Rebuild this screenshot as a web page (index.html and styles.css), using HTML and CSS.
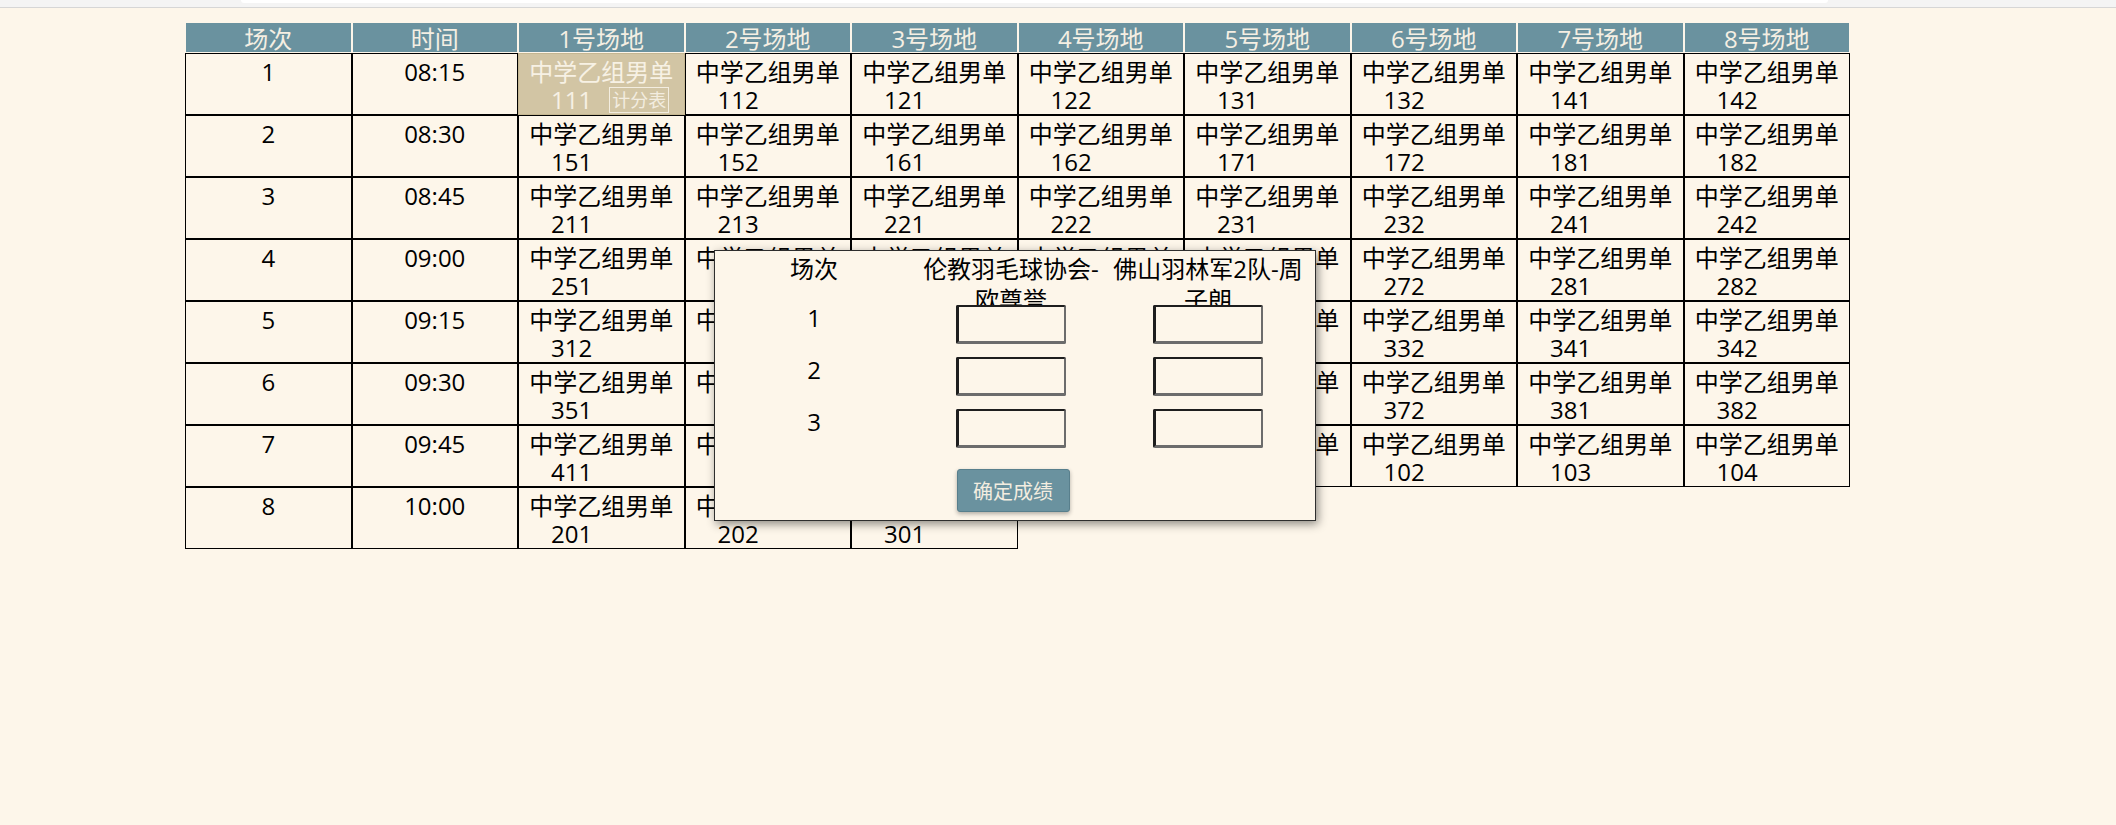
FILE: index.html
```html
<!DOCTYPE html>
<html lang="zh-CN">
<head>
<meta charset="utf-8">
<title>赛程</title>
<link rel="stylesheet" href="styles.css">
</head>
<body>
<div class="chrome"><div class="chrome-field"></div></div>
<main class="page">
  <table class="schedule">
    <thead>
      <tr>
        <th>场次</th><th>时间</th><th>1号场地</th><th>2号场地</th><th>3号场地</th><th>4号场地</th><th>5号场地</th><th>6号场地</th><th>7号场地</th><th>8号场地</th>
      </tr>
    </thead>
    <tbody>
      <tr>
        <td>1</td><td>08:15</td>
        <td class="ev is-active"><div class="ev-name">中学乙组男单</div><div class="ev-num"><span>111</span><span class="score-btn">计分表</span></div></td>
        <td class="ev"><div class="ev-name">中学乙组男单</div><div class="ev-num"><span>112</span><span class="score-btn">计分表</span></div></td>
        <td class="ev"><div class="ev-name">中学乙组男单</div><div class="ev-num"><span>121</span><span class="score-btn">计分表</span></div></td>
        <td class="ev"><div class="ev-name">中学乙组男单</div><div class="ev-num"><span>122</span><span class="score-btn">计分表</span></div></td>
        <td class="ev"><div class="ev-name">中学乙组男单</div><div class="ev-num"><span>131</span><span class="score-btn">计分表</span></div></td>
        <td class="ev"><div class="ev-name">中学乙组男单</div><div class="ev-num"><span>132</span><span class="score-btn">计分表</span></div></td>
        <td class="ev"><div class="ev-name">中学乙组男单</div><div class="ev-num"><span>141</span><span class="score-btn">计分表</span></div></td>
        <td class="ev"><div class="ev-name">中学乙组男单</div><div class="ev-num"><span>142</span><span class="score-btn">计分表</span></div></td>
      </tr>
      <tr>
        <td>2</td><td>08:30</td>
        <td class="ev"><div class="ev-name">中学乙组男单</div><div class="ev-num"><span>151</span><span class="score-btn">计分表</span></div></td>
        <td class="ev"><div class="ev-name">中学乙组男单</div><div class="ev-num"><span>152</span><span class="score-btn">计分表</span></div></td>
        <td class="ev"><div class="ev-name">中学乙组男单</div><div class="ev-num"><span>161</span><span class="score-btn">计分表</span></div></td>
        <td class="ev"><div class="ev-name">中学乙组男单</div><div class="ev-num"><span>162</span><span class="score-btn">计分表</span></div></td>
        <td class="ev"><div class="ev-name">中学乙组男单</div><div class="ev-num"><span>171</span><span class="score-btn">计分表</span></div></td>
        <td class="ev"><div class="ev-name">中学乙组男单</div><div class="ev-num"><span>172</span><span class="score-btn">计分表</span></div></td>
        <td class="ev"><div class="ev-name">中学乙组男单</div><div class="ev-num"><span>181</span><span class="score-btn">计分表</span></div></td>
        <td class="ev"><div class="ev-name">中学乙组男单</div><div class="ev-num"><span>182</span><span class="score-btn">计分表</span></div></td>
      </tr>
      <tr>
        <td>3</td><td>08:45</td>
        <td class="ev"><div class="ev-name">中学乙组男单</div><div class="ev-num"><span>211</span><span class="score-btn">计分表</span></div></td>
        <td class="ev"><div class="ev-name">中学乙组男单</div><div class="ev-num"><span>213</span><span class="score-btn">计分表</span></div></td>
        <td class="ev"><div class="ev-name">中学乙组男单</div><div class="ev-num"><span>221</span><span class="score-btn">计分表</span></div></td>
        <td class="ev"><div class="ev-name">中学乙组男单</div><div class="ev-num"><span>222</span><span class="score-btn">计分表</span></div></td>
        <td class="ev"><div class="ev-name">中学乙组男单</div><div class="ev-num"><span>231</span><span class="score-btn">计分表</span></div></td>
        <td class="ev"><div class="ev-name">中学乙组男单</div><div class="ev-num"><span>232</span><span class="score-btn">计分表</span></div></td>
        <td class="ev"><div class="ev-name">中学乙组男单</div><div class="ev-num"><span>241</span><span class="score-btn">计分表</span></div></td>
        <td class="ev"><div class="ev-name">中学乙组男单</div><div class="ev-num"><span>242</span><span class="score-btn">计分表</span></div></td>
      </tr>
      <tr>
        <td>4</td><td>09:00</td>
        <td class="ev"><div class="ev-name">中学乙组男单</div><div class="ev-num"><span>251</span><span class="score-btn">计分表</span></div></td>
        <td class="ev"><div class="ev-name">中学乙组男单</div><div class="ev-num"><span>252</span><span class="score-btn">计分表</span></div></td>
        <td class="ev"><div class="ev-name">中学乙组男单</div><div class="ev-num"><span>261</span><span class="score-btn">计分表</span></div></td>
        <td class="ev"><div class="ev-name">中学乙组男单</div><div class="ev-num"><span>262</span><span class="score-btn">计分表</span></div></td>
        <td class="ev"><div class="ev-name">中学乙组男单</div><div class="ev-num"><span>271</span><span class="score-btn">计分表</span></div></td>
        <td class="ev"><div class="ev-name">中学乙组男单</div><div class="ev-num"><span>272</span><span class="score-btn">计分表</span></div></td>
        <td class="ev"><div class="ev-name">中学乙组男单</div><div class="ev-num"><span>281</span><span class="score-btn">计分表</span></div></td>
        <td class="ev"><div class="ev-name">中学乙组男单</div><div class="ev-num"><span>282</span><span class="score-btn">计分表</span></div></td>
      </tr>
      <tr>
        <td>5</td><td>09:15</td>
        <td class="ev"><div class="ev-name">中学乙组男单</div><div class="ev-num"><span>312</span><span class="score-btn">计分表</span></div></td>
        <td class="ev"><div class="ev-name">中学乙组男单</div><div class="ev-num"><span>313</span><span class="score-btn">计分表</span></div></td>
        <td class="ev"><div class="ev-name">中学乙组男单</div><div class="ev-num"><span>321</span><span class="score-btn">计分表</span></div></td>
        <td class="ev"><div class="ev-name">中学乙组男单</div><div class="ev-num"><span>322</span><span class="score-btn">计分表</span></div></td>
        <td class="ev"><div class="ev-name">中学乙组男单</div><div class="ev-num"><span>331</span><span class="score-btn">计分表</span></div></td>
        <td class="ev"><div class="ev-name">中学乙组男单</div><div class="ev-num"><span>332</span><span class="score-btn">计分表</span></div></td>
        <td class="ev"><div class="ev-name">中学乙组男单</div><div class="ev-num"><span>341</span><span class="score-btn">计分表</span></div></td>
        <td class="ev"><div class="ev-name">中学乙组男单</div><div class="ev-num"><span>342</span><span class="score-btn">计分表</span></div></td>
      </tr>
      <tr>
        <td>6</td><td>09:30</td>
        <td class="ev"><div class="ev-name">中学乙组男单</div><div class="ev-num"><span>351</span><span class="score-btn">计分表</span></div></td>
        <td class="ev"><div class="ev-name">中学乙组男单</div><div class="ev-num"><span>352</span><span class="score-btn">计分表</span></div></td>
        <td class="ev"><div class="ev-name">中学乙组男单</div><div class="ev-num"><span>361</span><span class="score-btn">计分表</span></div></td>
        <td class="ev"><div class="ev-name">中学乙组男单</div><div class="ev-num"><span>362</span><span class="score-btn">计分表</span></div></td>
        <td class="ev"><div class="ev-name">中学乙组男单</div><div class="ev-num"><span>371</span><span class="score-btn">计分表</span></div></td>
        <td class="ev"><div class="ev-name">中学乙组男单</div><div class="ev-num"><span>372</span><span class="score-btn">计分表</span></div></td>
        <td class="ev"><div class="ev-name">中学乙组男单</div><div class="ev-num"><span>381</span><span class="score-btn">计分表</span></div></td>
        <td class="ev"><div class="ev-name">中学乙组男单</div><div class="ev-num"><span>382</span><span class="score-btn">计分表</span></div></td>
      </tr>
      <tr>
        <td>7</td><td>09:45</td>
        <td class="ev"><div class="ev-name">中学乙组男单</div><div class="ev-num"><span>411</span><span class="score-btn">计分表</span></div></td>
        <td class="ev"><div class="ev-name">中学乙组男单</div><div class="ev-num"><span>412</span><span class="score-btn">计分表</span></div></td>
        <td class="ev"><div class="ev-name">中学乙组男单</div><div class="ev-num"><span>421</span><span class="score-btn">计分表</span></div></td>
        <td class="ev"><div class="ev-name">中学乙组男单</div><div class="ev-num"><span>422</span><span class="score-btn">计分表</span></div></td>
        <td class="ev"><div class="ev-name">中学乙组男单</div><div class="ev-num"><span>101</span><span class="score-btn">计分表</span></div></td>
        <td class="ev"><div class="ev-name">中学乙组男单</div><div class="ev-num"><span>102</span><span class="score-btn">计分表</span></div></td>
        <td class="ev"><div class="ev-name">中学乙组男单</div><div class="ev-num"><span>103</span><span class="score-btn">计分表</span></div></td>
        <td class="ev"><div class="ev-name">中学乙组男单</div><div class="ev-num"><span>104</span><span class="score-btn">计分表</span></div></td>
      </tr>
      <tr>
        <td>8</td><td>10:00</td>
        <td class="ev"><div class="ev-name">中学乙组男单</div><div class="ev-num"><span>201</span><span class="score-btn">计分表</span></div></td>
        <td class="ev"><div class="ev-name">中学乙组男单</div><div class="ev-num"><span>202</span><span class="score-btn">计分表</span></div></td>
        <td class="ev"><div class="ev-name">中学乙组男单</div><div class="ev-num"><span>301</span><span class="score-btn">计分表</span></div></td>
      </tr>
    </tbody>
  </table>

  <div class="score-dialog">
    <div class="sd-grid">
      <div class="sd-head">场次</div>
      <div class="sd-head">伦教羽毛球协会-欧尊誉</div>
      <div class="sd-head">佛山羽林军2队-周子朗</div>

      <div class="sd-label">1</div>
      <div class="sd-cell"><input class="sd-input" type="text"></div>
      <div class="sd-cell"><input class="sd-input" type="text"></div>

      <div class="sd-label">2</div>
      <div class="sd-cell"><input class="sd-input" type="text"></div>
      <div class="sd-cell"><input class="sd-input" type="text"></div>

      <div class="sd-label">3</div>
      <div class="sd-cell"><input class="sd-input" type="text"></div>
      <div class="sd-cell"><input class="sd-input" type="text"></div>

      <div class="sd-actions"><button class="sd-submit" type="button">确定成绩</button></div>
    </div>
  </div>
</main>
</body>
</html>
```

FILE: styles.css
```css
* { box-sizing: border-box; }

html, body {
  margin: 0;
  padding: 0;
}

body {
  background: #fdf6ea;
  font-family: "Open Sans", "Noto Sans CJK SC", sans-serif;
  color: #000;
  width: 2116px;
  height: 825px;
  overflow: hidden;
}

.chrome {
  height: 8px;
  background: #f4f4f4;
  border-bottom: 1px solid #d6d6d6;
}

.chrome-field {
  margin-left: 241px;
  width: 1587px;
  height: 3px;
  background: #ffffff;
  border-radius: 0 0 6px 6px;
}

.page {
  position: relative;
  padding: 14px 0 0 185px;
}

.schedule {
  width: 1665px;
  table-layout: fixed;
  border-collapse: separate;
  border-spacing: 0;
  font-size: 24px;
}

.schedule th {
  background: #6a929f;
  color: #f5efe3;
  font-weight: normal;
  border: 1px solid #fdf6ea;
  padding: 3px 0 0;
  line-height: 26px;
  text-align: center;
  white-space: nowrap;
}

.schedule td {
  border: 1px solid #000;
  vertical-align: top;
  text-align: center;
  padding: 4px 0 0;
  line-height: 28px;
  height: 62px;
}

.ev-name {
  height: 28px;
  line-height: 28px;
  white-space: nowrap;
}

.ev-num {
  display: flex;
  align-items: center;
  height: 28px;
  line-height: 28px;
  padding-left: 32px;
  white-space: nowrap;
}

.score-btn {
  display: inline-block;
  margin-left: 17px;
  height: 26px;
  padding: 0 2px;
  border: 1px solid #f3ede0;
  font-size: 18px;
  line-height: 24px;
  color: #f3ede0;
  visibility: hidden;
}

.schedule td.is-active {
  background: #d2c5a4;
  border-color: #c4b691;
  color: #f7f1e4;
}

.schedule td.is-active .score-btn {
  visibility: visible;
}

/* score entry dialog */
.score-dialog {
  position: absolute;
  left: 714px;
  top: 242px;
  width: 602px;
  height: 271px;
  background: #fdf6ea;
  border: 1px solid #2e2e2e;
  box-shadow: 2px 3px 9px rgba(0, 0, 0, 0.45);
  padding-top: 1px;
  font-size: 24px;
}

.sd-grid {
  display: grid;
  grid-template-columns: 198px 196px 198px;
  grid-template-rows: 46px 52px 52px 52px auto;
}

.sd-head {
  text-align: center;
  line-height: 31px;
  padding-top: 1px;
  height: 46px;
}

.sd-label {
  text-align: center;
  line-height: 30px;
  padding-top: 5px;
}

.sd-cell {
  display: flex;
  align-items: center;
  justify-content: center;
}

.sd-input {
  width: 110px;
  height: 39px;
  margin: 0;
  padding: 0 4px;
  background: #fdf6ea;
  border-style: solid;
  border-width: 2px 2px 3px 3px;
  border-color: #1e1e1e #6c6c6c #6c6c6c #1e1e1e;
  border-radius: 2px;
  font-family: inherit;
  font-size: 18px;
}

.sd-actions {
  grid-column: 2;
  display: flex;
  justify-content: center;
  padding: 15px 0 0 4px;
}

.sd-submit {
  width: 113px;
  height: 43px;
  margin: 0;
  padding: 0;
  background: #6a929f;
  border: 1px solid #587f8c;
  border-radius: 3px;
  color: #f3ede0;
  font-family: "Open Sans", "Noto Sans CJK SC", sans-serif;
  font-size: 20px;
  box-shadow: 0 2px 4px rgba(0, 0, 0, 0.3);
}
```
